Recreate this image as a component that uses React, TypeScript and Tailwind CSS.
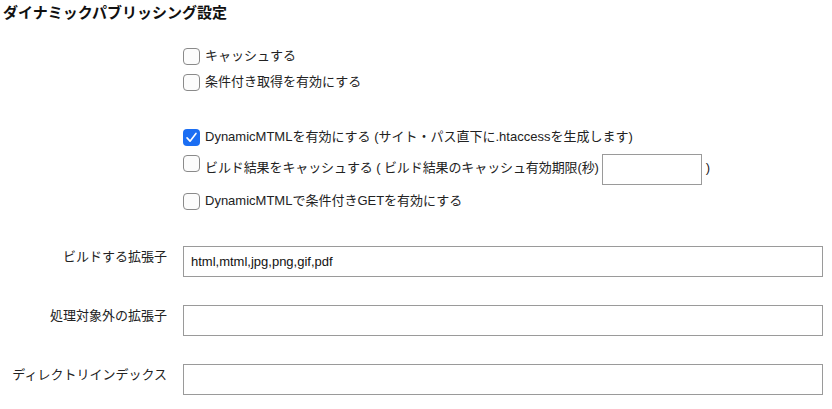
import React from 'react';

function Box({ checked = false }: { checked?: boolean }) {
  if (checked) {
    return (
      <span className="flex h-[17px] w-[17px] shrink-0 items-center justify-center rounded-[4px] bg-[#1b6ef3]">
        <svg viewBox="0 0 16 16" className="h-[13px] w-[13px]">
          <path d="M2.5 8.5 L6.2 12.5 L13.5 3" fill="none" stroke="#fff" strokeWidth="2" strokeLinecap="round" strokeLinejoin="round" />
        </svg>
      </span>
    );
  }
  return <span className="block h-[17px] w-[17px] shrink-0 rounded-[4px] border border-[#8a8a8a] bg-[#fcfcfc]" />;
}

function CheckRow({ checked, children }: { checked?: boolean; children: React.ReactNode }) {
  return (
    <div className="flex h-[26px] items-center gap-[5px]">
      <Box checked={checked} />
      <span>{children}</span>
    </div>
  );
}

const fields = [
  { label: 'ビルドする拡張子', value: 'html,mtml,jpg,png,gif,pdf' },
  { label: '処理対象外の拡張子', value: '' },
  { label: 'ディレクトリインデックス', value: '' },
];

export default function App() {
  return (
    <div
      className="h-[409px] w-[832px] overflow-hidden bg-white text-[13px] leading-[18px] text-[#222]"
      style={{ fontFamily: '"Liberation Sans", "Noto Sans CJK JP", sans-serif' }}
    >
      <h2 className="pl-[3px] pt-[3px] text-[15px] font-bold leading-[20px] text-[#111]">ダイナミックパブリッシング設定</h2>

      <div className="ml-[183px] mt-[20px]">
        <CheckRow>キャッシュする</CheckRow>
        <CheckRow>条件付き取得を有効にする</CheckRow>
      </div>

      <div className="ml-[183px] mt-[29px]">
        <CheckRow checked>DynamicMTMLを有効にする (サイト・パス直下に.htaccessを生成します)</CheckRow>
        <div className="mt-[4px] flex h-[31px] items-start">
          <div className="mt-[1px]">
            <Box />
          </div>
          <span className="ml-[5px] mt-[5px] tracking-[-0.1px]">ビルド結果をキャッシュする ( ビルド結果のキャッシュ有効期限(秒)</span>
          <input className="ml-[3px] h-[31px] w-[100px] border border-[#9a9a9a] px-[6px] outline-none" />
          <span className="ml-[4px] mt-[5px]">)</span>
        </div>
        <div className="mt-[3px]">
          <CheckRow>DynamicMTMLで条件付きGETを有効にする</CheckRow>
        </div>
      </div>

      <div className="mt-[32px] flex flex-col gap-[28px]">
        {fields.map((f) => (
          <div key={f.label} className="flex gap-[16px]">
            <label className="w-[167px] pt-[2px] text-right">{f.label}</label>
            <input
              defaultValue={f.value}
              className="h-[31px] w-[640px] border border-[#9a9a9a] px-[7px] text-[13px] text-[#111] outline-none"
            />
          </div>
        ))}
      </div>
    </div>
  );
}
